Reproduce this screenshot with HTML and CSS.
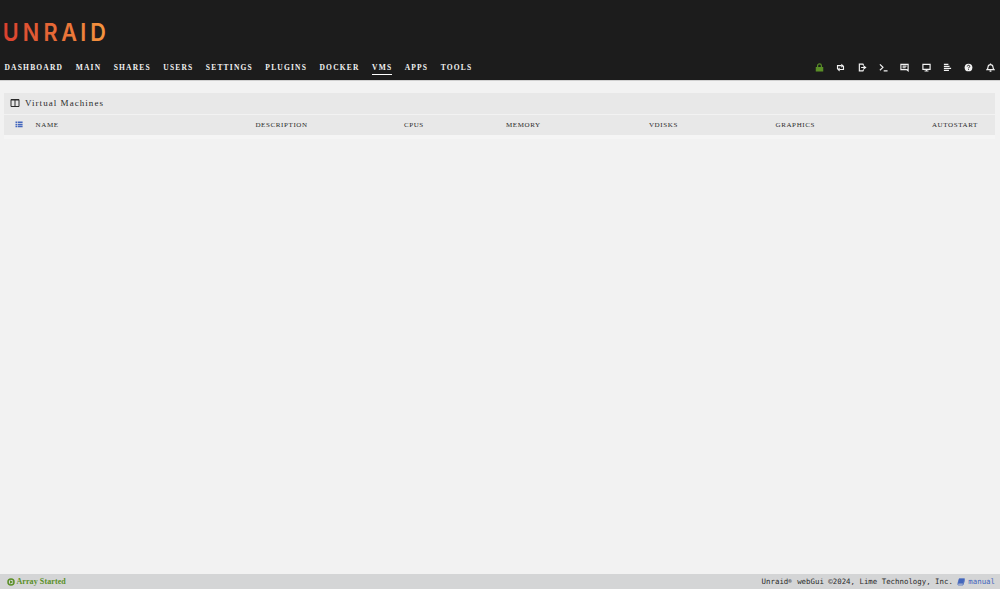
FILE: index.html
```html
<!DOCTYPE html>
<html lang="en">
<head>
<meta charset="utf-8">
<title>Virtual Machines</title>
<link rel="stylesheet" href="styles.css">
</head>
<body>
<header class="header">
  <svg class="logo" width="130" height="40" viewBox="0 0 130 40" role="img" aria-label="UNRAID">
    <defs><linearGradient id="brand" gradientUnits="userSpaceOnUse" x1="4" y1="0" x2="118" y2="0"><stop offset="0" stop-color="#d9402f"/><stop offset="1" stop-color="#f5963f"/></linearGradient></defs>
    <text class="logo-text" transform="scale(.9 1)" x="3.2 25.3 48.4 68 89.3 100.2" y="30.7" fill="url(#brand)">UNRAID</text>
  </svg>
  <div class="bar">
    <nav class="nav">
      <a>DASHBOARD</a><a>MAIN</a><a>SHARES</a><a>USERS</a><a>SETTINGS</a><a>PLUGINS</a><a>DOCKER</a><a class="active">VMS</a><a>APPS</a><a>TOOLS</a>
    </nav>
    <div class="tools">
      <svg class="icon lock" viewBox="0 0 10 10"><path d="M1.5 5.2h7v3.7h-7z" fill="currentColor"/><path d="M2.9 5V3a2.1 2.1 0 0 1 4.2 0V5"/></svg>
      <svg class="icon" viewBox="0 0 10 10"><path d="M1.7 6.8V3h4.6M8.3 3.2v4H3.7"/><path d="M5.9.8 8.7 3 5.9 5.2zM4.1 5 1.3 7.2l2.8 2.2z" fill="currentColor" stroke="none"/></svg>
      <svg class="icon" viewBox="0 0 10 10"><path d="M6.3 2.7 5.5 1.3h-4v7.4h4l.8-1.4M3.5 5h4"/><path d="M6.1 2.4 9.5 5 6.1 7.6z" fill="currentColor" stroke="none"/></svg>
      <svg class="icon" viewBox="0 0 10 10"><path d="M1 1.6 4.4 4.8 1 8M5.2 8.7h4.3"/></svg>
      <svg class="icon" viewBox="0 0 10 10"><path d="M1 1.5h8v7.2L7.2 7.3H1zM2.8 3.5h4.5M2.8 5.3h3.5"/></svg>
      <svg class="icon" viewBox="0 0 10 10"><path d="M1 1.5h8v5.5H1zM5 7v1.7M2.8 8.9h4.4"/></svg>
      <svg class="icon" viewBox="0 0 10 10"><path d="M1 1.6h5M1 3.8h6.3M1 6h8M1 8.2h5.6"/></svg>
      <svg class="icon" viewBox="0 0 10 10"><circle cx="5" cy="5" r="4.3" fill="currentColor" stroke="none"/><path class="cutout" d="M3.6 3.9c0-1.8 2.8-1.7 2.8-.1C6.4 4.8 5 4.7 5 5.8M5 6.5v1"/></svg>
      <svg class="icon" viewBox="0 0 10 10"><path d="M1.1 7.4h7.8C7.9 6.4 7.8 5.5 7.7 4.2 7.4 1.1 2.6 1.1 2.3 4.2 2.2 5.5 2.1 6.4 1.1 7.4zM5 1.8V.6M4 9h2"/></svg>
    </div>
  </div>
</header>
<main class="content">
  <h1 class="title">
    <svg class="title-icon" viewBox="0 0 10 10"><path d="M1 1.5h8v7H1zM5 1.5v7M1 2h8"/></svg>
    <span>Virtual Machines</span>
  </h1>
  <div class="table-head">
    <svg class="list-icon" viewBox="0 0 8 7"><path d="M.5 1.3h1.7M2.8 1.3h4.8M.5 3.4h1.7M2.8 3.4h4.8M.5 5.5h1.7M2.8 5.5h4.8"/></svg>
    <span>NAME</span><span>DESCRIPTION</span><span>CPUS</span><span>MEMORY</span><span>VDISKS</span><span>GRAPHICS</span><span>AUTOSTART</span>
  </div>
  <div class="table-body"></div>
</main>
<footer class="footer">
  <div class="status">
    <svg class="play" viewBox="0 0 8 8"><circle cx="4" cy="4" r="3"/><path d="M3 2.2 6 4 3 5.8z"/></svg>
    <span>Array Started</span>
  </div>
  <div class="copyright">
    <span>Unraid<span class="mark">®</span> webGui ©2024, Lime Technology, Inc.</span>
    <a class="manual"><svg class="book" viewBox="0 0 8 8"><path d="M2.2.8h5.3L6 5.2H1z" fill="currentColor"/><path d="M1.1 5.2C.4 6.8 1 7 1.7 7H6L7.5 2.3M3.2 2.2h2.6"/></svg><span>manual</span></a>
  </div>
</footer>
</body>
</html>
```
FILE: styles.css
```css
* { box-sizing: border-box; }
body {
  margin: 0;
  height: 589px;
  display: flex;
  flex-direction: column;
  overflow: hidden;
  background: #f2f2f2;
  color: #2b2b2b;
  font-family: "Liberation Serif", serif;
}
svg { display: block; flex: none; }
.header {
  height: 81px;
  padding-top: 10px;
  border-bottom: 1px solid #d0d0d0;
  background: #1c1c1c;
  color: #f2f2f2;
}
.logo-text { font: 600 24px Inter, sans-serif; }
.bar {
  height: 30px;
  padding: 0 5.5px 0 4.5px;
  display: flex;
  justify-content: space-between;
}
.nav {
  display: flex;
  gap: 12.4px;
  padding-top: 11px;
  font-size: 7.5px;
  font-weight: bold;
  line-height: 13px;
  letter-spacing: 1.2px;
}
.nav .active { height: 14px; border-bottom: 1px solid #fff; }
.tools { display: flex; gap: 12.3px; padding-top: 13.4px; }
.icon {
  width: 9px;
  height: 9px;
  fill: none;
  stroke: currentColor;
  stroke-width: 1.3;
}
.lock { color: #5a8f27; }
.cutout { stroke: #1c1c1c; stroke-width: 1.1; }
.content { flex: 1; padding: 12px 5px 0 4px; }
.title {
  display: flex;
  align-items: center;
  gap: 5px;
  height: 21px;
  margin: 0 0 1px;
  padding: 0 0 1px 6px;
  background: #e8e8e8;
  font-size: 9px;
  line-height: 10px;
  font-weight: normal;
  letter-spacing: 1.05px;
}
.title-icon { width: 10px; height: 10px; fill: none; stroke: #2b2b2b; }
.table-head {
  display: grid;
  grid-template-columns: 20.6px 219.8px 148.5px 102px 143px 126.6px 156.4px 1fr;
  align-items: center;
  height: 20px;
  padding: 0 0 0 11px;
  background: #e8e8e8;
  font-size: 7px;
  line-height: 8px;
  letter-spacing: .62px;
}
.list-icon { width: 8px; height: 7px; margin-top: -1px; fill: none; stroke: #4467bd; stroke-width: 1.5; }
.table-body { height: 4px; background: #f5f5f5; }
.footer {
  display: flex;
  align-items: center;
  justify-content: space-between;
  height: 15px;
  padding: 0 5px 0 7px;
  background: #d4d5d6;
}
.status { display: flex; align-items: center; gap: 1.4px; color: #5a8f27; font-size: 8px; font-weight: bold; letter-spacing: .1px; }
.play { width: 8px; height: 8px; fill: none; stroke: currentColor; stroke-width: 1.5; }
.play path { fill: currentColor; stroke: none; }
.copyright, .manual { display: flex; align-items: center; }
.copyright { gap: 4px; font: 7.4px "DejaVu Sans Mono", monospace; }
.mark { display: inline-block; width: 4.45px; font-size: 5.5px; line-height: 1; vertical-align: 1.5px; }
.manual { gap: 3.4px; color: #4467bd; }
.book { width: 8px; height: 8px; fill: none; stroke: currentColor; stroke-width: .8; }
```
